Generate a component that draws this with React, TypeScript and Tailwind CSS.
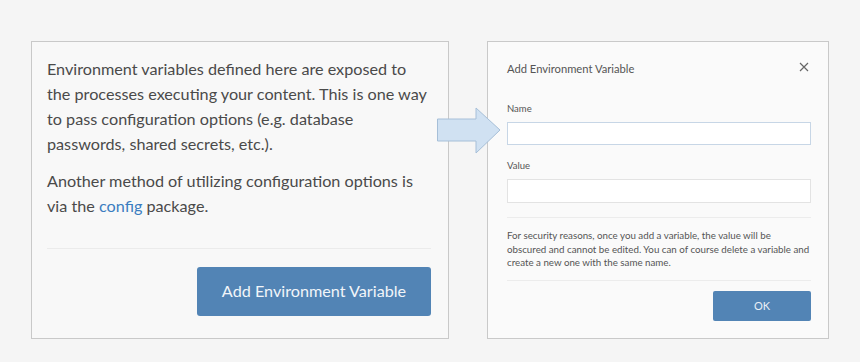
const App = () => {
  return (
    <div
      className="relative w-[860px] h-[362px] bg-[#f5f5f5] pt-[41px] pl-[31px] flex gap-[38px]"
      style={{ fontFamily: "Lato, 'Open Sans', sans-serif" }}
    >
      {/* Left panel */}
      <div className="w-[418px] h-[298px] border border-[#c9c9c9] bg-[#f8f8f8] pt-[14px] pl-[15px] pr-[17px] flex flex-col">
        <div className="pr-[2px]">
          <p className="text-[16.2px] leading-[25px] text-[#4a4a4a]">
            Environment variables defined here are exposed to the processes
            executing your content. This is one way to pass configuration
            options (e.g. database passwords, shared secrets, etc.).
          </p>
          <p className="mt-[12px] text-[16.2px] leading-[25px] text-[#4a4a4a]">
            Another method of utilizing configuration options is via the{" "}
            <a className="text-[#3b7dc0]">config</a> package.
          </p>
        </div>
        <div className="mt-[30px] h-px bg-[#ebebeb]" />
        <div className="mt-[18px] flex justify-end">
          <button className="w-[234px] h-[49px] rounded-[3px] bg-[#5284b5] text-[16.2px] text-[#f1f5f9]">
            Add Environment Variable
          </button>
        </div>
      </div>

      {/* Dialog */}
      <div className="w-[342px] h-[298px] border border-[#c9c9c9] bg-[#fafafa] pl-[19px] pr-[17px] flex flex-col">
        <div className="mt-[19px] flex items-center justify-between">
          <span className="text-[11.2px] text-[#555]">Add Environment Variable</span>
          <svg width="10" height="10" viewBox="0 0 10 10" className="mr-[2px] -mt-[4px]">
            <path d="M1 1 L9 9 M9 1 L1 9" stroke="#666" strokeWidth="1.2" />
          </svg>
        </div>
        <label className="mt-[25px] text-[9.5px] leading-[12px] text-[#555]">Name</label>
        <div className="mt-[7px] h-[23px] border border-[#c7d6e6] bg-white" />
        <label className="mt-[15px] text-[9.5px] leading-[12px] text-[#555]">Value</label>
        <div className="mt-[7px] h-[24px] border border-[#e3e3e3] bg-white" />
        <div className="mt-[14px] h-px bg-[#ececec]" />
        <p className="mt-[11px] text-[9.75px] leading-[13.7px] text-[#555] whitespace-nowrap">
          For security reasons, once you add a variable, the value will be
          <br />
          obscured and cannot be edited. You can of course delete a variable and
          <br />
          create a new one with the same name.
        </p>
        <div className="mt-[10px] h-px bg-[#ececec]" />
        <div className="mt-[10px] flex justify-end">
          <button className="w-[98px] h-[30px] rounded-[2px] bg-[#5284b5] text-[11px] text-[#e8eef5]">
            OK
          </button>
        </div>
      </div>

      {/* Arrow overlay */}
      <svg
        className="absolute left-[436px] top-[107px]"
        width="66"
        height="47"
        viewBox="0 0 66 47"
      >
        <polygon
          points="1.5,12 40,12 40,1 64,23 40,46 40,34 1.5,34"
          fill="#d0e1f2"
          stroke="#a6bfd8"
          strokeWidth="1"
        />
      </svg>
    </div>
  );
};

export default App;
